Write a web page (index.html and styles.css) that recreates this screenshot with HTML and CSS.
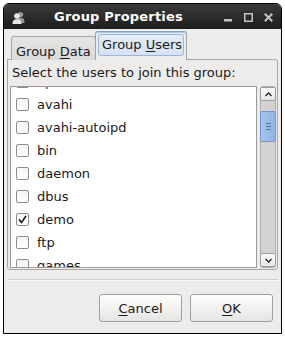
FILE: index.html
```html
<!DOCTYPE html>
<html>
<head>
<meta charset="utf-8">
<link rel="stylesheet" href="styles.css">
</head>
<body>
<div class="window">
  <div class="titlebar">
    <svg class="appicon" width="13" height="13" viewBox="0 0 13 13">
      <circle cx="8.5" cy="3.5" r="2.6" fill="#9a9a9a"/>
      <path d="M4.5 12 C4.5 8 6 6.8 8.5 6.8 C11 6.8 12.5 8 12.5 12 Z" fill="#9a9a9a"/>
      <circle cx="5" cy="5" r="2.8" fill="#e8e8e8"/>
      <path d="M0.5 13 C0.5 9.5 2 8.3 5 8.3 C8 8.3 9.5 9.5 9.5 13 Z" fill="#e8e8e8"/>
    </svg>
    <div class="title">Group Properties</div>
    <div class="controls">
      <svg width="9" height="9" viewBox="0 0 9 9"><rect x="0" y="6" width="8" height="2.5" fill="#c4c4c4"/></svg>
      <svg width="9" height="9" viewBox="0 0 9 9"><rect x="0.75" y="0.75" width="7.5" height="7.5" fill="none" stroke="#c4c4c4" stroke-width="1.5"/></svg>
      <svg width="9" height="9" viewBox="0 0 9 9"><path d="M0.8 0.8 L8.2 8.2 M8.2 0.8 L0.8 8.2" stroke="#c4c4c4" stroke-width="2"/></svg>
    </div>
  </div>
  <div class="body">
    <div class="tabs">
      <div class="tab">Group <u>D</u>ata</div>
      <div class="tab active"><span class="tab-focus">Group <u>U</u>sers</span></div>
    </div>
    <div class="panel">
      <div class="prompt">Select the users to join this group:</div>
      <div class="scrolled">
        <div class="listbox">
          <ul class="list">
            <li class="row"><span class="check"></span>apache</li>
            <li class="row"><span class="check"></span>avahi</li>
            <li class="row"><span class="check"></span>avahi-autoipd</li>
            <li class="row"><span class="check"></span>bin</li>
            <li class="row"><span class="check"></span>daemon</li>
            <li class="row"><span class="check"></span>dbus</li>
            <li class="row"><span class="check checked"><svg width="11" height="11" viewBox="0 0 11 11"><path d="M2 5.5 L4.5 8.5 L9 2" fill="none" stroke="#1a1a1a" stroke-width="1.6"/></svg></span>demo</li>
            <li class="row"><span class="check"></span>ftp</li>
            <li class="row"><span class="check"></span>games</li>
          </ul>
        </div>
        <div class="scrollbar">
          <div class="sbtn"><svg width="7" height="5" viewBox="0 0 7 5"><path d="M0.5 4 L3.5 1 L6.5 4" fill="none" stroke="#222" stroke-width="1.3"/></svg></div>
          <div class="trough">
            <div class="thumb"><span class="grip"></span><span class="grip"></span><span class="grip"></span></div>
          </div>
          <div class="sbtn"><svg width="7" height="5" viewBox="0 0 7 5"><path d="M0.5 1 L3.5 4 L6.5 1" fill="none" stroke="#222" stroke-width="1.3"/></svg></div>
        </div>
      </div>
    </div>
    <div class="separator"></div>
    <div class="buttons">
      <button class="btn"><u>C</u>ancel</button>
      <button class="btn"><u>O</u>K</button>
    </div>
  </div>
</div>
</body>
</html>
```
FILE: styles.css
```css
html, body {
  margin: 0;
  padding: 0;
  background: #ffffff;
}
body {
  font-family: "DejaVu Sans", "Liberation Sans", sans-serif;
  font-size: 13px;
  color: #1a1a1a;
}
.window {
  margin: 3px 0 0 3px;
  width: 277px;
  height: 329px;
  border: 1px solid #000;
  border-radius: 6px 6px 0 0;
  background: #edeceb;
  display: flex;
  flex-direction: column;
  overflow: hidden;
}
.titlebar {
  height: 25px;
  flex: none;
  background: linear-gradient(#3a3a3a, #1d1d1d);
  display: flex;
  align-items: center;
  padding: 0 8px 0 8px;
}
.appicon {
  flex: none;
  margin-top: 1px;
}
.title {
  flex: 1;
  text-align: center;
  color: #ffffff;
  font-weight: bold;
  font-size: 13px;
  padding-right: 12px;
  letter-spacing: 0.2px;
}
.controls {
  display: flex;
  gap: 11px;
  align-items: center;
  margin-top: 1px;
}
.body {
  flex: 1;
  display: flex;
  flex-direction: column;
  padding: 0 3px;
}
.tabs {
  height: 31px;
  display: flex;
  align-items: flex-end;
  padding-left: 4px;
  position: relative;
  z-index: 1;
  margin-bottom: -1px;
}
.tab {
  height: 24px;
  box-sizing: border-box;
  padding: 7px 0 0 4px;
  width: 85px;
  border: 1px solid #a7a6a4;
  border-bottom: none;
  border-radius: 3px 3px 0 0;
  background: linear-gradient(#e6e5e3, #dbdad8);
  line-height: 15px;
  white-space: nowrap;
}
.tab.active {
  height: 29px;
  width: 92px;
  margin-left: -1px;
  padding: 2px 2px 0 2px;
  background: #edeceb;
  border-color: #9fa4ab;
  border-top: 1px solid #7ea4d6;
  box-shadow: inset 0 1px 0 #a9c6ec;
}
.tab-focus {
  display: block;
  height: 22px;
  box-sizing: border-box;
  border: 1px solid #9ab6dc;
  border-radius: 3px;
  background: linear-gradient(#e3ecf8, #d6e2f3);
  padding: 2px 0 0 3px;
  line-height: 15px;
  white-space: nowrap;
}
.panel {
  height: 211px;
  box-sizing: border-box;
  border: 1px solid #a8a7a5;
  border-radius: 0 3px 3px 3px;
  background: #edeceb;
  padding: 0 1px 0 2px;
  display: flex;
  flex-direction: column;
}
.prompt {
  height: 26px;
  line-height: 26px;
  padding-left: 2px;
}
.scrolled {
  display: flex;
  height: 182px;
}
.listbox {
  width: 247px;
  box-sizing: border-box;
  border: 1px solid #9c9b99;
  background: #ffffff;
  overflow: hidden;
}
.list {
  list-style: none;
  margin: -17px 0 0 0;
  padding: 0;
}
.row {
  height: 23px;
  display: flex;
  align-items: center;
  padding-left: 5px;
  line-height: 23px;
  color: #1a1a1a;
}
.check {
  width: 13px;
  height: 13px;
  box-sizing: border-box;
  border: 1px solid #8e8d8b;
  border-radius: 2px;
  background: linear-gradient(#f4f4f3, #ffffff);
  margin-right: 8px;
  display: flex;
  align-items: center;
  justify-content: center;
  flex: none;
}
.scrollbar {
  width: 16px;
  margin-left: 3px;
  box-sizing: border-box;
  border: 1px solid #b0afad;
  border-radius: 3px;
  background: #d3d2d0;
  display: flex;
  flex-direction: column;
}
.sbtn {
  height: 14px;
  flex: none;
  box-sizing: border-box;
  border: 1px solid #9f9e9c;
  border-radius: 2px;
  margin: 0 -1px;
  background: linear-gradient(#fbfbfa, #e8e7e5);
  display: flex;
  align-items: center;
  justify-content: center;
}
.trough {
  flex: 1;
  padding-top: 10px;
}
.thumb {
  height: 31px;
  box-sizing: border-box;
  border: 1px solid #6f97cc;
  border-radius: 2px;
  margin: 0 -1px;
  background: linear-gradient(90deg, #a6c3ea, #8fb3e2);
  display: flex;
  flex-direction: column;
  align-items: center;
  justify-content: center;
  gap: 2px;
}
.grip {
  width: 5px;
  height: 1px;
  background: #4f77ad;
}
.separator {
  margin: 9px 0 0 1px;
  height: 1px;
  background: #cfcecc;
  border-bottom: 1px solid #fafafa;
}
.buttons {
  display: flex;
  justify-content: flex-end;
  gap: 8px;
  padding: 13px 5px 0 0;
}
.btn {
  width: 83px;
  height: 28px;
  font-family: "DejaVu Sans", "Liberation Sans", sans-serif;
  font-size: 13px;
  color: #1a1a1a;
  border: 1px solid #a09f9d;
  border-radius: 3px;
  background: linear-gradient(#fdfdfc, #e6e5e3);
  padding: 0;
}
u {
  text-decoration-thickness: 1px;
  text-underline-offset: 2px;
}
```
